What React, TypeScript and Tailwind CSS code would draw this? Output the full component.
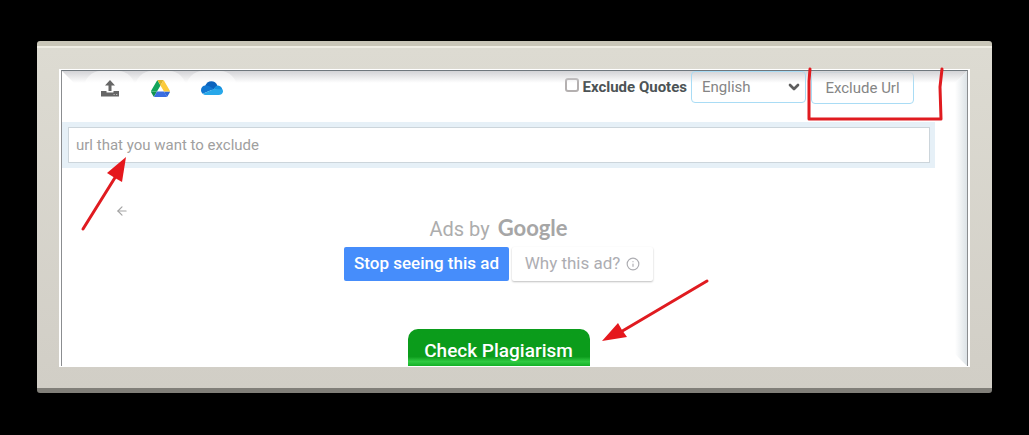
import { useState } from "react";
import { ArrowLeft, ChevronDown, Info } from "lucide-react";

function UploadIcon() {
  return (
    <svg viewBox="0 0 18 17" className="h-[17px] w-[18px]" fill="#666666" aria-hidden="true">
      <path d="M9 0 14 5.5H10.5V11H7.5V5.5H4Z" />
      <path d="M0 11H5.5V12.5H12.5V11H18V16.5H0Z" />
      <path d="M12.5 14h1.3v1h-1.3zM15 14h1.3v1H15z" fill="#b5b5b5" />
    </svg>
  );
}

function DriveIcon() {
  return (
    <svg viewBox="0 0 87.3 78" className="h-[17px] w-[19px]" aria-hidden="true">
      <path d="m6.6 66.85 3.85 6.65c.8 1.4 1.95 2.5 3.3 3.3l13.75-23.8h-27.5c0 1.55.4 3.1 1.2 4.5z" fill="#0f9150" />
      <path d="m43.65 25-13.75-23.8c-1.35.8-2.5 1.9-3.3 3.3l-25.4 44a9.06 9.06 0 0 0-1.2 4.5h27.5z" fill="#13a45a" />
      <path d="m73.55 76.8c1.35-.8 2.5-1.9 3.3-3.3l9.25-16c.8-1.4 1.2-2.95 1.2-4.5h-27.5l5.85 11.5z" fill="#3267d6" />
      <path d="m43.65 25 13.75-23.8c-1.35-.8-2.9-1.2-4.5-1.2h-18.5c-1.6 0-3.15.45-4.5 1.2z" fill="#d9b42c" />
      <path d="m59.8 53h-32.3l-13.75 23.8c1.35.8 2.9 1.2 4.5 1.2h50.8c1.6 0 3.15-.45 4.5-1.2z" fill="#3b6de0" />
      <path d="m73.4 26.5-12.7-22c-.8-1.4-1.95-2.5-3.3-3.3l-13.75 23.8 16.15 28h27.45c0-1.55-.4-3.1-1.2-4.5z" fill="#fccb3c" />
    </svg>
  );
}

function OneDriveIcon() {
  return (
    <svg viewBox="0 0 22 14" className="h-[14px] w-[22px]" aria-hidden="true">
      <path d="M4 5.3C5 2 7.5.2 10.3.2c2.8 0 5.1 1.6 6.1 4.2L12 9 4 5.3Z" fill="#0b63bd" />
      <path d="M4.5 4.6C2 4.6 0 6.6 0 9.1c0 1.6.7 2.8 1.7 3.6L13 7.9 8.4 5.2c-1.1-.6-2.5-.8-3.9-.6Z" fill="#1177d1" />
      <path d="M13 7.9c.7-2.2 2.1-3.5 4-3.5 2.3.3 4 1.8 4.3 4l-1 2.3L13 7.9Z" fill="#1490df" />
      <path d="M1.7 12.7c.8.8 1.8 1.2 2.9 1.2h13c2.5 0 4.4-1.6 4.4-3.7 0-.7-.2-1.3-.6-1.8L13 7.9 1.7 12.7Z" fill="#28a8ea" />
    </svg>
  );
}

const sources = [
  { name: "Upload file", Icon: UploadIcon },
  { name: "Google Drive", Icon: DriveIcon },
  { name: "OneDrive", Icon: OneDriveIcon },
];

function Toolbar() {
  const [excludeQuotes, setExcludeQuotes] = useState(false);

  return (
    <div className="flex items-start pl-[22px] pr-[53px]">
      <div className="flex">
        {sources.map(({ name, Icon }) => (
          <button key={name} type="button" aria-label={name} className="relative flex h-[34px] w-[51px] items-center justify-center rounded-full bg-white/50">
            <Icon />
          </button>
        ))}
      </div>

      <div className="ml-auto flex items-start">
        <label className="mr-1 flex h-8 items-center gap-1 text-[15px] font-bold text-[#4c5355]">
          <input
            type="checkbox"
            checked={excludeQuotes}
            onChange={(e) => setExcludeQuotes(e.target.checked)}
            className="mb-1 size-[14px] appearance-none rounded-[3px] border-2 border-[#b4b0b0] bg-white checked:bg-[#468dfb]"
          />
          Exclude Quotes
        </label>
        <div className="relative mr-[5px]">
          <select aria-label="Language" className="h-8 w-[115px] appearance-none rounded border border-[#a9dcf5] bg-transparent pl-[10px] text-[15px] text-[#858585]">
            <option>English</option>
            <option>Spanish</option>
            <option>French</option>
          </select>
          <ChevronDown className="pointer-events-none absolute right-1 top-2 size-4 text-[#5d5d5d]" strokeWidth={4} />
        </div>
        <button type="button" className="mt-px h-8 w-[103px] rounded border border-[#a9dcf5] bg-white text-[15px] text-[#858585]">
          Exclude Url
        </button>
      </div>
    </div>
  );
}

function AdNotice() {
  return (
    <section className="mr-8 pt-9">
      <button type="button" aria-label="Back" className="ml-[53px] block text-[#a3a3a3]">
        <ArrowLeft className="size-[14px]" />
      </button>
      <div className="flex flex-col items-center">
        <p className="flex items-baseline gap-2 text-[20px] leading-5 text-[#adadad]">
          Ads by <span className="font-[Lato] text-[22px] font-bold text-[#a6a6a6]">Google</span>
        </p>
        <div className="mt-2 flex gap-[3px]">
          <button type="button" className="h-[34px] w-[165px] rounded-[2px] bg-[#468dfb] text-[17px] font-medium text-white">
            Stop seeing this ad
          </button>
          <button type="button" className="flex h-[34px] w-[141px] items-center justify-center gap-1.5 rounded-[2px] bg-white text-[17px] text-[#adadb2] shadow-[0_1px_2px_rgba(0,0,0,0.25)]">
            Why this ad?
            <Info className="size-[14px]" />
          </button>
        </div>
      </div>
    </section>
  );
}

// Red pen marks that point at the controls
function Annotations() {
  return (
    <svg viewBox="0 0 905 296" className="pointer-events-none absolute left-0 top-0 h-[296px] w-[905px] overflow-visible" aria-hidden="true">
      <g fill="none" stroke="#e01b20" strokeWidth="3" strokeLinecap="round" strokeLinejoin="round">
        <path d="M748 -2 747 10V48H879L878 16 880 -2" />
        <path d="M21 158 54 105" />
        <path d="M645 210 557 262" />
      </g>
      <path d="M64 86 60 111 53 107 45 102Z" fill="#e5181d" />
      <path d="M540 270 556 252 560 259 565 266Z" fill="#e5181d" />
    </svg>
  );
}

export default function App() {
  return (
    <main className="min-h-screen bg-black px-[37px] pb-[42px] pt-[41px] font-[Roboto,sans-serif]">
      <div className="rounded-[3px] border-b-[5px] border-t-[5px] border-b-[#817f79] border-t-[#c9c6b8] bg-[#d3d0c7]">
        <div className="border-t-2 border-[#efede4] bg-linear-to-b from-[#dddbd2] to-[#d1cec6] px-[22px] pb-[21px] pt-[21px]">
          <div className="border-x-2 border-y border-white bg-white">
            <div className="relative border-x border-t border-[#8b8d90] border-t-[#6f777d] bg-white">
              <div className="pointer-events-none absolute inset-x-0 top-0 h-3 bg-linear-to-b from-[#d3d3d6] to-transparent [clip-path:polygon(0_0,100%_0,calc(100%_-_12px)_100%,12px_100%)]" />
              <div className="pointer-events-none absolute inset-y-0 right-0 w-3 bg-linear-to-l from-[#dce2e6] to-transparent [clip-path:polygon(100%_0,0_12px,0_calc(100%_-_12px),100%_100%)]" />

              <Toolbar />

              <div className="mr-8 mt-[17px] bg-[#e6f0f7] py-[5px] pl-1.5 pr-[5px]">
                <input
                  type="text"
                  aria-label="Url to exclude"
                  placeholder="url that you want to exclude"
                  className="block h-9 w-full border border-[#ccd5db] bg-white px-[7px] text-[15px] text-[#555555] outline-none placeholder:text-[#a0a0a0]"
                />
              </div>

              <AdNotice />

              <div className="mr-8 mt-12 flex justify-center">
                <button type="button" className="h-[37px] w-[182px] rounded-t-[10px] bg-linear-to-b from-[#0b9c1b] from-75% via-[#2fcb42] via-88% to-[#13b026] pt-2 text-[19px] font-medium text-white">
                  Check Plagiarism
                </button>
              </div>

              <Annotations />
            </div>
          </div>
        </div>
      </div>
    </main>
  );
}
